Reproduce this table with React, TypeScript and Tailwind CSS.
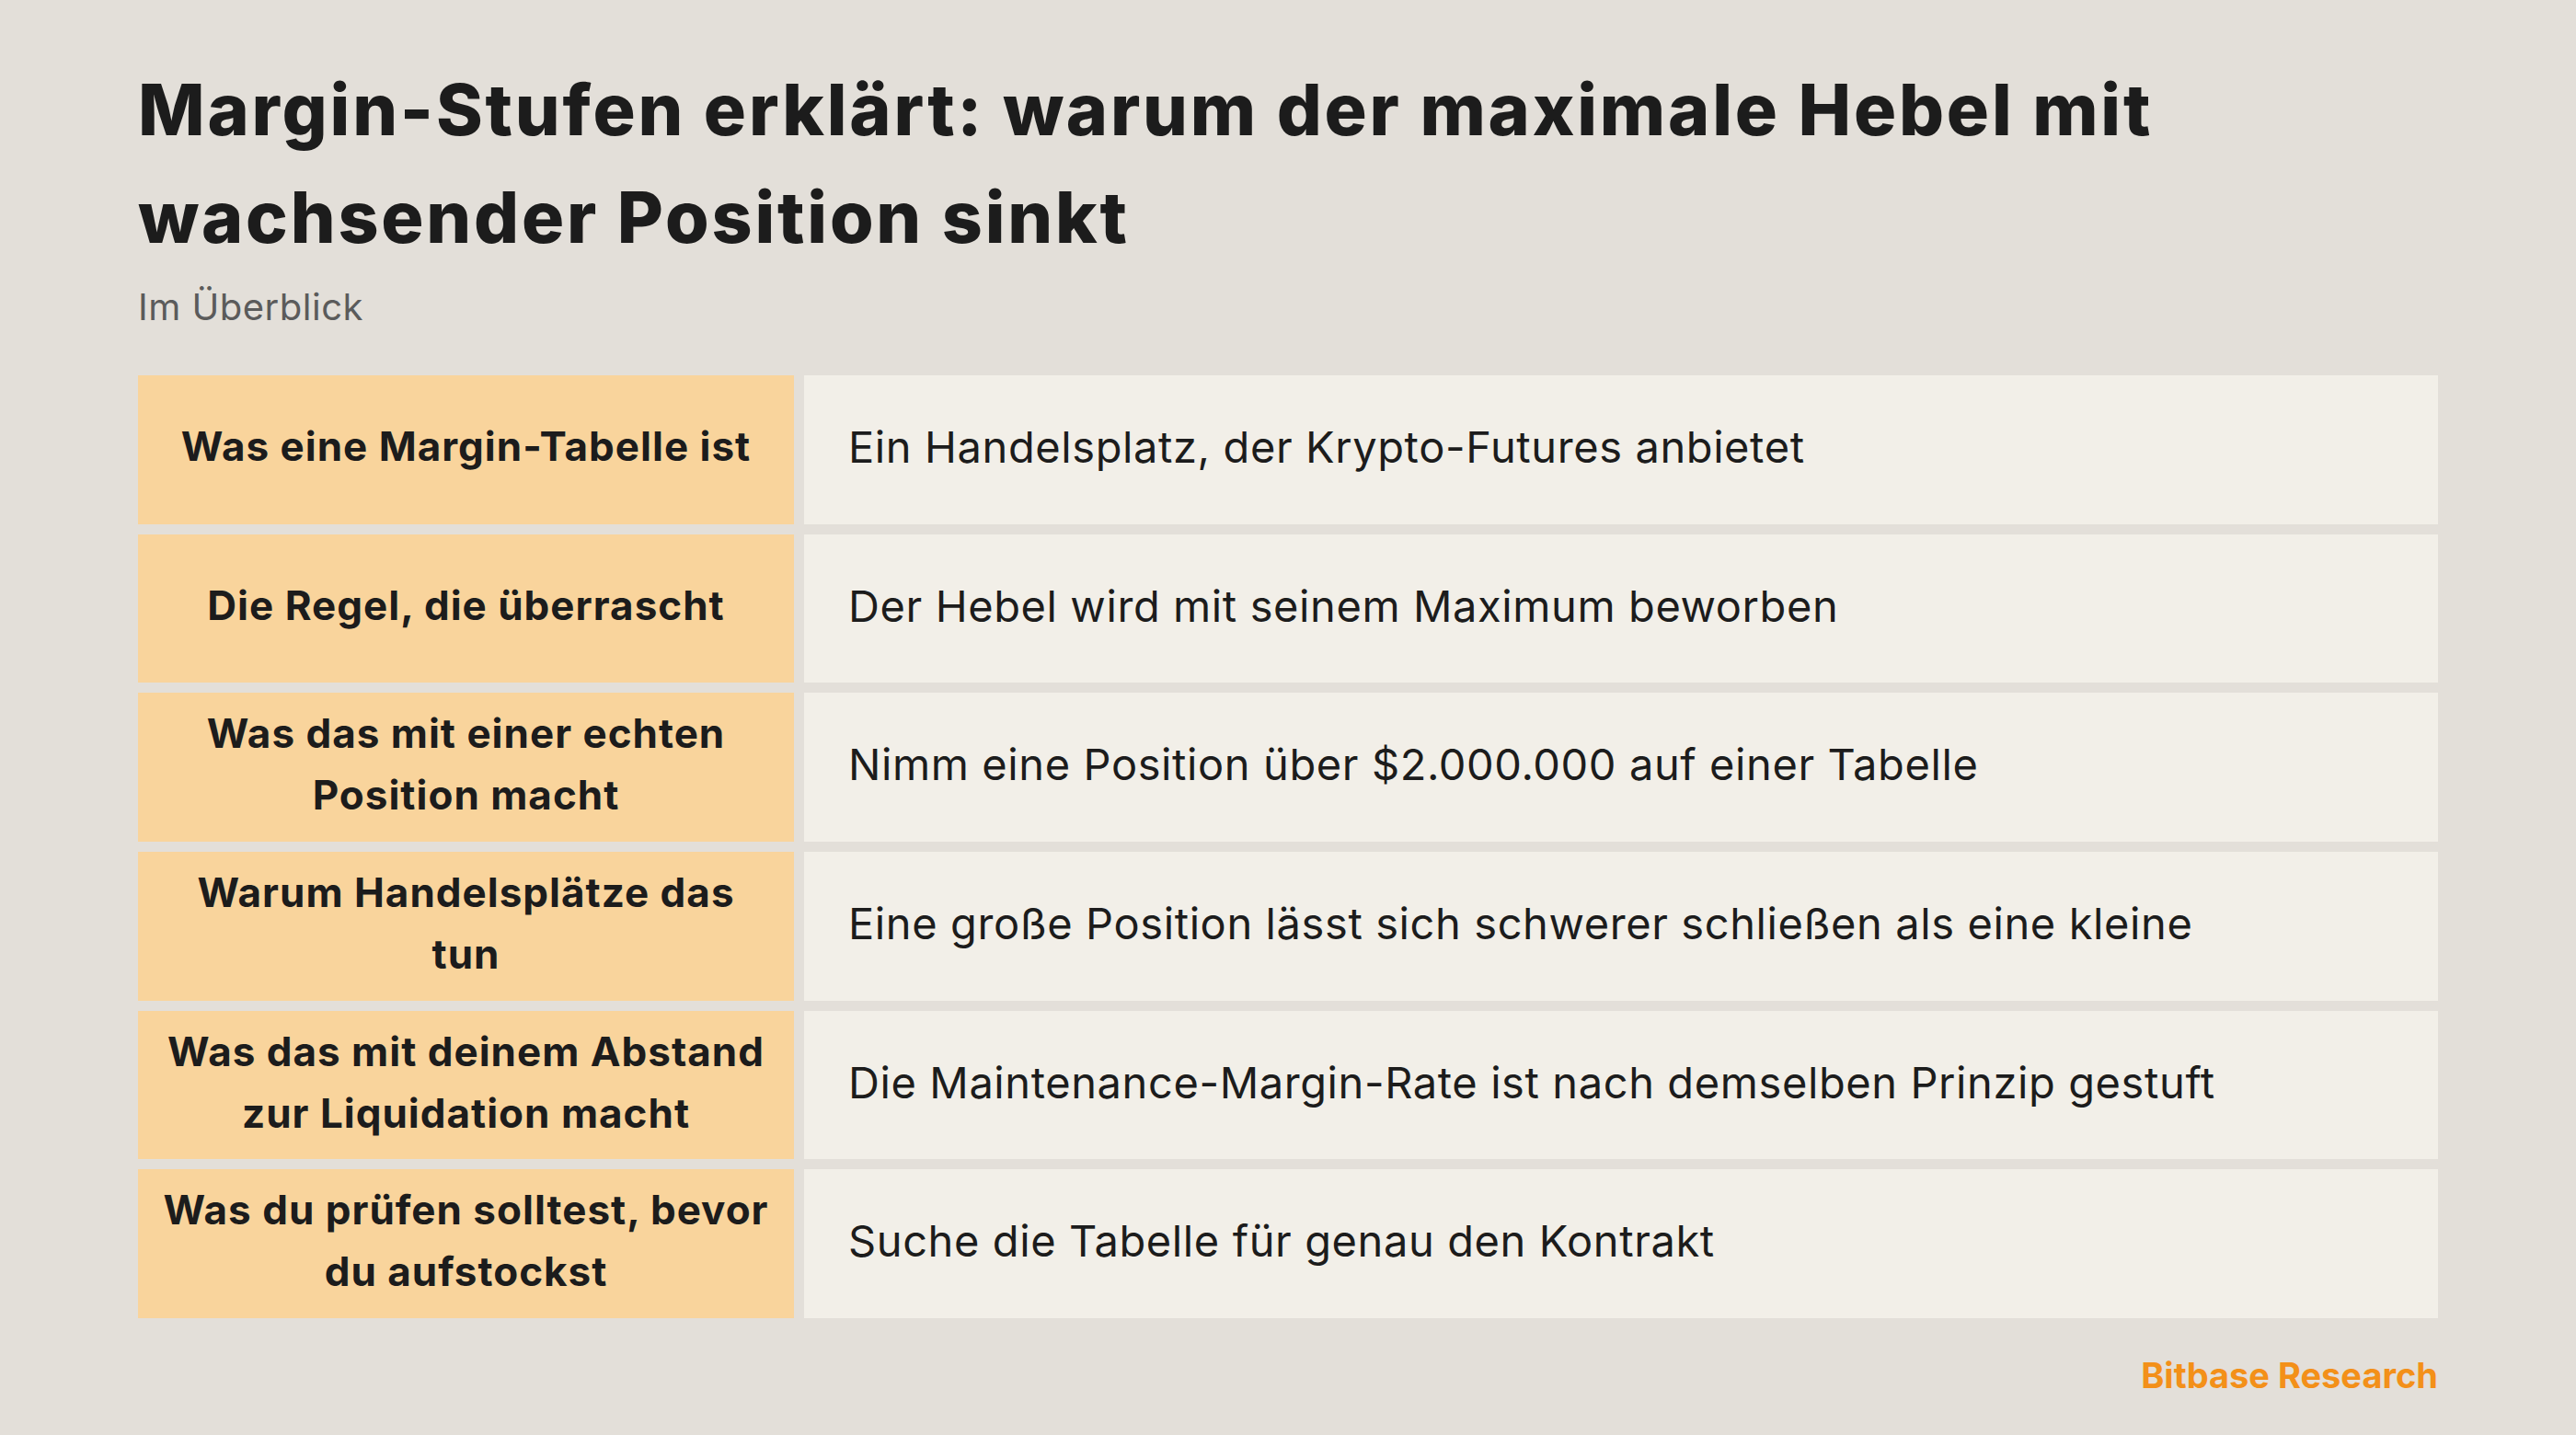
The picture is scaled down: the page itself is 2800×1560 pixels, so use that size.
const rows: { label: string[]; value: string }[] = [
  { label: ['Was eine Margin-Tabelle ist'], value: 'Ein Handelsplatz, der Krypto-Futures anbietet' },
  { label: ['Die Regel, die überrascht'], value: 'Der Hebel wird mit seinem Maximum beworben' },
  { label: ['Was das mit einer echten', 'Position macht'], value: 'Nimm eine Position über $2.000.000 auf einer Tabelle' },
  { label: ['Warum Handelsplätze das', 'tun'], value: 'Eine große Position lässt sich schwerer schließen als eine kleine' },
  { label: ['Was das mit deinem Abstand', 'zur Liquidation macht'], value: 'Die Maintenance-Margin-Rate ist nach demselben Prinzip gestuft' },
  { label: ['Was du prüfen solltest, bevor', 'du aufstockst'], value: 'Suche die Tabelle für genau den Kontrakt' },
]

export default function App() {
  return (
    <div
      className="w-[2800px] h-[1560px] bg-[#e3dfd9] text-[#1c1c1c] px-[150px] pt-[61px] flex flex-col"
      style={{ fontFamily: 'Inter, "Noto Sans", sans-serif' }}
    >
      {/* Header */}
      <h1 className="text-[77px] leading-[117px] font-extrabold tracking-[2.8px]">
        Margin-Stufen erklärt: warum der maximale Hebel mit
        <br />
        wachsender Position sinkt
      </h1>
      <p className="mt-[9px] text-[40px] leading-[60px] tracking-[0.5px] text-[#5b5b5b]">Im Überblick</p>

      {/* Table */}
      <div className="mt-[44px] h-[1025px] flex flex-col gap-[11px]">
        {rows.map((row, i) => (
          <div key={i} className="flex-1 grid grid-cols-[713px_1fr] gap-[11px]">
            <div className="bg-[#f9d49c] flex items-center justify-center text-center px-4 pb-[6px]">
              <span className="text-[44px] leading-[67px] font-bold tracking-[1px]">
                {row.label.map((line, j) => (
                  <span key={j} className="block">
                    {line}
                  </span>
                ))}
              </span>
            </div>
            <div className="bg-[#f2efe8] flex items-center px-12 pb-[6px]">
              <span className="text-[47px] leading-[64px] tracking-[0.6px]">{row.value}</span>
            </div>
          </div>
        ))}
      </div>

      {/* Footer */}
      <div className="mt-[38px] flex justify-end">
        <span className="text-[38px] leading-[48px] font-bold text-[#f39019]">Bitbase Research</span>
      </div>
    </div>
  )
}
